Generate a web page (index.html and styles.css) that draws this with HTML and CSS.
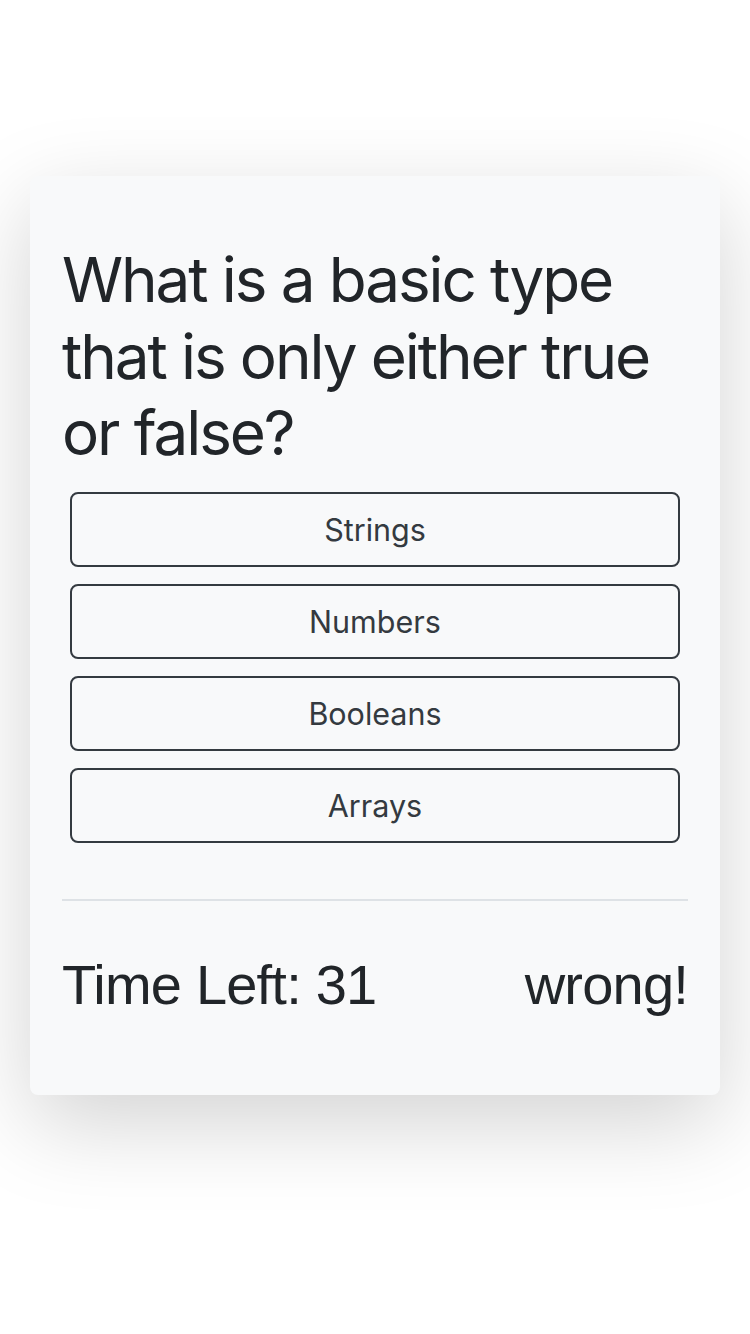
FILE: index.html
```html
<!DOCTYPE html>
<html lang="en">
<head>
<meta charset="utf-8">
<title>Quiz</title>
<link rel="stylesheet" href="styles.css">
</head>
<body>
<main class="card">
  <h1 class="question">What is a basic type that is only either true or false?</h1>
  <div class="answers">
    <button class="answer">Strings</button>
    <button class="answer">Numbers</button>
    <button class="answer">Booleans</button>
    <button class="answer">Arrays</button>
  </div>
  <hr class="divider">
  <div class="status">
    <span class="timer">Time Left: 31</span>
    <span class="result">wrong!</span>
  </div>
</main>
</body>
</html>
```
FILE: styles.css
```css
html, body {
  margin: 0;
  padding: 0;
  background: #fff;
}
body {
  box-sizing: border-box;
  min-height: 100vh;
  font-family: Inter, "Noto Sans", sans-serif;
  color: #212529;
  padding: 176px 30px 0;
}
.card {
  background: #f8f9fa;
  border-radius: 8px;
  box-shadow: 0 28px 90px rgba(0, 0, 0, 0.175);
  padding: 66px 32px 77px;
  display: flex;
  flex-direction: column;
}
.question {
  margin: 0;
  font-size: 62px;
  font-weight: 400;
  line-height: 76.5px;
  letter-spacing: -2.1px;
}
.answers {
  display: flex;
  flex-direction: column;
  gap: 17px;
  margin: 20px 8px 0;
}
.answer {
  font-family: Inter, "Noto Sans", sans-serif;
  font-size: 30.5px;
  line-height: 45px;
  color: #343a40;
  background: transparent;
  border: 2px solid #343a40;
  border-radius: 8px;
  padding: 13px 20px;
  text-align: center;
}
.divider {
  margin: 56px 0 0;
  border: 0;
  border-top: 2px solid #dee2e6;
}
.status {
  margin-top: 50px;
  display: flex;
  justify-content: space-between;
  font-family: "Liberation Sans", Arial, sans-serif;
  font-size: 56px;
  line-height: 1.2;
  letter-spacing: -0.8px;
  color: #212529;
}
```
